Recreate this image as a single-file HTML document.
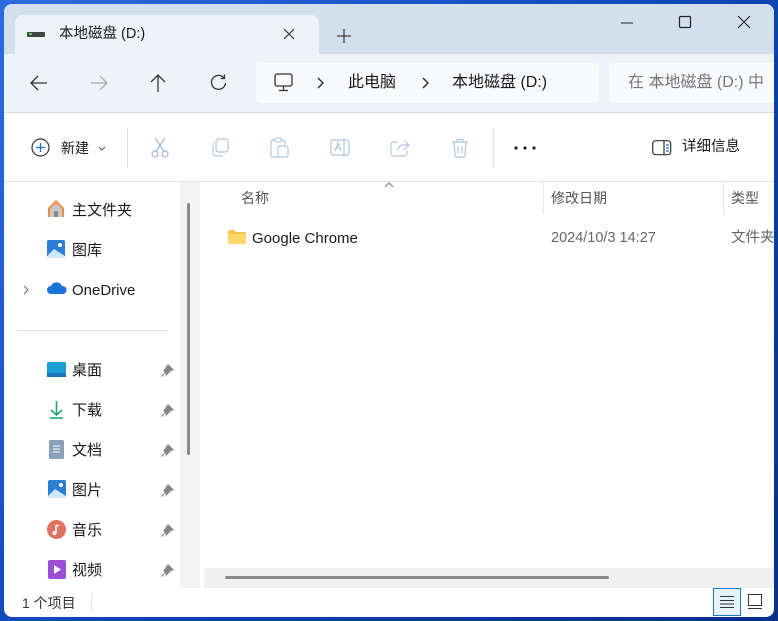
<!DOCTYPE html>
<html><head><meta charset="utf-8"><style>
*{margin:0;padding:0;box-sizing:border-box}
body{width:778px;height:621px;overflow:hidden;background:linear-gradient(135deg,#2a6de0,#0b3fb0 60%,#0a2f8a);font-family:"Liberation Sans","Noto Sans CJK SC",sans-serif;position:relative;color:#1a1a1a}
.win{position:absolute;left:4px;top:4px;width:770px;height:613px;background:#fff;border-radius:8px;overflow:hidden}
.abs{position:absolute}
.t{position:absolute;font-size:15px;white-space:nowrap;line-height:1}
svg{position:absolute;overflow:visible}
</style></head><body>
<div class="win">
  <div class="abs" style="left:0;top:0;width:770px;height:50px;background:#d4dfed"></div>
  <div class="abs" style="left:11px;top:11px;width:304px;height:42px;background:#eef3f9;border-radius:8px 8px 0 0"></div>
  <div class="abs" style="left:0;top:50px;width:770px;height:59px;background:#eef3f9;border-bottom:1px solid #d6dbe2"></div>
  <div class="abs" style="left:252px;top:59px;width:343px;height:40px;background:#f8fafd;border-radius:5px"></div>
  <div class="abs" style="left:605px;top:59px;width:170px;height:40px;background:#f8fafd;border-radius:5px"></div>
</div>
<!-- tab -->
<div class="abs" style="left:27px;top:32px;width:18px;height:5px;background:#444;border-radius:1px"></div>
<div class="abs" style="left:29px;top:33px;width:3px;height:2px;background:#6c6"></div>
<div class="t" style="left:59px;top:27px;font-size:14.5px">本地磁盘 (D:)</div>
<svg style="left:283px;top:28px" width="12" height="12"><path d="M1 1L11 11M11 1L1 11" stroke="#333" stroke-width="1.2"/></svg>
<svg style="left:337px;top:29px" width="14" height="14"><path d="M7 0V14M0 7H14" stroke="#444" stroke-width="1.3"/></svg>
<!-- window controls -->
<svg style="left:621px;top:22px" width="12" height="2"><path d="M0 1H12" stroke="#222" stroke-width="1"/></svg>
<svg style="left:679px;top:16px" width="12" height="12"><rect x=".5" y=".5" width="11" height="11" fill="none" stroke="#222" stroke-width="1.2" rx="1"/></svg>
<svg style="left:738px;top:16px" width="12" height="12"><path d="M0 0L12 12M12 0L0 12" stroke="#222" stroke-width="1.1"/></svg>
<!-- nav -->
<svg style="left:30px;top:75px" width="18" height="16"><path d="M17 8H1M8 1L1 8L8 15" stroke="#333" stroke-width="1.3" fill="none"/></svg>
<svg style="left:90px;top:75px" width="18" height="16"><path d="M1 8H17M10 1L17 8L10 15" stroke="#aaa" stroke-width="1.3" fill="none"/></svg>
<svg style="left:150px;top:74px" width="16" height="18"><path d="M8 18V1M1 8L8 1L15 8" stroke="#333" stroke-width="1.3" fill="none"/></svg>
<svg style="left:210px;top:74px" width="17" height="17"><path d="M14 4A7 7 0 1 0 15.5 9M14.5 0.5V4.5H10.5" stroke="#333" stroke-width="1.3" fill="none"/></svg>
<svg style="left:274px;top:73px" width="20" height="19"><rect x="1" y="1" width="17" height="12" rx="2" fill="none" stroke="#333" stroke-width="1.3"/><path d="M9.5 13V17M5 17.5H14" stroke="#333" stroke-width="1.3"/></svg>
<svg style="left:317px;top:77px" width="8" height="12"><path d="M1 1L6 6L1 11" stroke="#222" stroke-width="1.3" fill="none"/></svg>
<div class="t" style="left:348px;top:75px;font-size:16px">此电脑</div>
<svg style="left:422px;top:77px" width="8" height="12"><path d="M1 1L6 6L1 11" stroke="#222" stroke-width="1.3" fill="none"/></svg>
<div class="t" style="left:452px;top:75px;font-size:16px">本地磁盘 (D:)</div>
<div class="t" style="left:628px;top:75px;font-size:16px;color:#777">在 本地磁盘 (D:) 中</div>
<!-- command bar -->
<svg style="left:31px;top:138px" width="19" height="19"><circle cx="9.5" cy="9.5" r="8.5" fill="none" stroke="#333" stroke-width="1.2"/><path d="M9.5 5V14M5 9.5H14" stroke="#1a6fd0" stroke-width="1.3"/></svg>
<div class="t" style="left:61px;top:141px;font-size:14px">新建</div>
<svg style="left:98px;top:146px" width="8" height="5"><path d="M1 1L4 4L7 1" stroke="#555" fill="none"/></svg>
<div class="abs" style="left:127px;top:128px;width:1px;height:40px;background:#e3e3e3"></div>
<svg style="left:150px;top:137px" width="20" height="21"><path d="M5 1L14 14M15 1L6 14" stroke="#9db8d6" stroke-width="1.2"/><circle cx="5" cy="17" r="3" fill="none" stroke="#9db8d6" stroke-width="1.2"/><circle cx="15" cy="17" r="3" fill="none" stroke="#9db8d6" stroke-width="1.2"/></svg>
<svg style="left:210px;top:138px" width="20" height="20"><rect x="6" y="1" width="12" height="13" rx="3" fill="none" stroke="#b0c6de" stroke-width="1.2"/><path d="M3 5V15A3 3 0 0 0 6 18H13" stroke="#b0c6de" stroke-width="1.2" fill="none"/></svg>
<svg style="left:270px;top:137px" width="20" height="21"><rect x="1" y="3" width="14" height="17" rx="2" fill="none" stroke="#b0c6de" stroke-width="1.2"/><rect x="5" y="1" width="6" height="4" rx="1" fill="#fff" stroke="#b0c6de"/><rect x="8" y="9" width="10" height="11" rx="2" fill="#fff" stroke="#b0c6de" stroke-width="1.2"/></svg>
<svg style="left:330px;top:138px" width="21" height="20"><rect x="1" y="2" width="18" height="15" rx="2" fill="none" stroke="#b0c6de" stroke-width="1.2"/><path d="M5 13L8 5L11 13M6 10H10M14 0V19" stroke="#b0c6de" stroke-width="1.2" fill="none"/></svg>
<svg style="left:390px;top:138px" width="21" height="20"><path d="M8 4H4A3 3 0 0 0 1 7V15A3 3 0 0 0 4 18H14A3 3 0 0 0 17 15V13" stroke="#b0c6de" stroke-width="1.2" fill="none"/><path d="M14 2L19 7L14 12M19 7H13A5 5 0 0 0 8 12" stroke="#b0c6de" stroke-width="1.2" fill="none"/></svg>
<svg style="left:451px;top:138px" width="18" height="20"><path d="M1 4H17M6 4V1.5H12V4M3 4L4 17A2 2 0 0 0 6 19H12A2 2 0 0 0 14 17L15 4M7 8V15M11 8V15" stroke="#b0c6de" stroke-width="1.2" fill="none"/></svg>
<div class="abs" style="left:493px;top:128px;width:1px;height:40px;background:#e3e3e3"></div>
<svg style="left:514px;top:146px" width="22" height="4"><circle cx="2" cy="2" r="1.6" fill="#222"/><circle cx="11" cy="2" r="1.6" fill="#222"/><circle cx="20" cy="2" r="1.6" fill="#222"/></svg>
<svg style="left:652px;top:140px" width="20" height="16"><rect x=".7" y=".7" width="18" height="14" rx="3" fill="none" stroke="#333" stroke-width="1.2"/><path d="M12 1V15" stroke="#333" stroke-width="1.2"/><path d="M14 5H17M14 8H17M14 11H17" stroke="#1a6fd0" stroke-width="1.2"/></svg>
<div class="t" style="left:682px;top:140px;font-size:14.5px">详细信息</div>
<div class="abs" style="left:4px;top:181px;width:770px;height:1px;background:#e5e5e5"></div>
<!-- sidebar -->
<div class="abs" style="left:180px;top:182px;width:20px;height:406px;background:#f3f3f3"></div>
<div class="abs" style="left:187px;top:203px;width:3px;height:252px;background:#8a8a8a;border-radius:2px"></div>
<div class="abs" style="left:204px;top:568px;width:570px;height:20px;background:#f0f0f0"></div>
<div class="abs" style="left:225px;top:576px;width:384px;height:3px;background:#888;border-radius:2px"></div>
<svg style="left:47px;top:199px" width="18" height="19"><path d="M9 1L1 9V18H17V9Z" fill="#f08a3a"/><path d="M3 9.5V18H15V9.5L9 4Z" fill="#c8c8c8"/><rect x="7" y="12" width="4" height="6" fill="#888"/></svg>
<div class="t" style="left:72px;top:203px">主文件夹</div>
<svg style="left:47px;top:240px" width="18" height="19"><rect width="18" height="18" rx="2" fill="#2a7fd4"/><path d="M0 16L7 9L18 16V18H0Z" fill="#cfe6fb"/><circle cx="13" cy="5" r="2" fill="#fff"/></svg>
<div class="t" style="left:72px;top:243px">图库</div>
<svg style="left:23px;top:285px" width="6" height="10"><path d="M1 1L5 5L1 9" stroke="#666" fill="none"/></svg>
<svg style="left:47px;top:282px" width="20" height="13"><path d="M4 12A4 4 0 0 1 4 4A6 6 0 0 1 15 4A4 4 0 0 1 16 12Z" fill="#1a73d8"/></svg>
<div class="t" style="left:72px;top:283px">OneDrive</div>
<div class="abs" style="left:17px;top:330px;width:151px;height:1px;background:#ddd"></div>
<svg style="left:47px;top:362px" width="19" height="16"><rect width="19" height="15" rx="1.5" fill="#1a9ed4"/><rect y="11" width="19" height="4" fill="#1776b8"/></svg>
<div class="t" style="left:72px;top:363px">桌面</div>
<svg style="left:49px;top:400px" width="15" height="19"><path d="M7.5 1V15M2 10L7.5 15L13 10" stroke="#1ea57a" stroke-width="1.6" fill="none"/><path d="M1 18H14" stroke="#1ea57a" stroke-width="1.6"/></svg>
<div class="t" style="left:72px;top:403px">下载</div>
<svg style="left:49px;top:440px" width="15" height="19"><rect width="15" height="19" rx="1.5" fill="#8aa0ba"/><path d="M4 6H11M4 9H11M4 12H11" stroke="#fff" stroke-width="1"/></svg>
<div class="t" style="left:72px;top:443px">文档</div>
<svg style="left:48px;top:480px" width="18" height="18"><rect width="18" height="18" rx="2" fill="#2a7fd4"/><path d="M0 16L7 9L18 16V18H0Z" fill="#cfe6fb"/><circle cx="13" cy="5" r="2" fill="#fff"/></svg>
<div class="t" style="left:72px;top:483px">图片</div>
<svg style="left:47px;top:520px" width="19" height="19"><circle cx="9.5" cy="9.5" r="9.5" fill="#e07060"/><path d="M9 5V13M9 5L12 6" stroke="#fff" stroke-width="1.5"/><circle cx="7.5" cy="13" r="2" fill="#fff"/></svg>
<div class="t" style="left:72px;top:523px">音乐</div>
<svg style="left:48px;top:560px" width="18" height="19"><rect width="18" height="19" rx="2" fill="#9b4fd4"/><path d="M6 5V14L13 9.5Z" fill="#fff"/></svg>
<div class="t" style="left:72px;top:563px">视频</div>
<svg style="left:161px;top:364px" width="14" height="100"><g fill="#888">
<path d="M7 0L13 6L10 7L7 10L5 12L4 9L1 13L0 12L4 8L2 7Z"/></g></svg>
<svg style="left:161px;top:404px" width="14" height="14"><path d="M7 0L13 6L10 7L7 10L5 12L4 9L1 13L0 12L4 8L2 7Z" fill="#888"/></svg>
<svg style="left:161px;top:444px" width="14" height="14"><path d="M7 0L13 6L10 7L7 10L5 12L4 9L1 13L0 12L4 8L2 7Z" fill="#888"/></svg>
<svg style="left:161px;top:484px" width="14" height="14"><path d="M7 0L13 6L10 7L7 10L5 12L4 9L1 13L0 12L4 8L2 7Z" fill="#888"/></svg>
<svg style="left:161px;top:524px" width="14" height="14"><path d="M7 0L13 6L10 7L7 10L5 12L4 9L1 13L0 12L4 8L2 7Z" fill="#888"/></svg>
<svg style="left:161px;top:564px" width="14" height="14"><path d="M7 0L13 6L10 7L7 10L5 12L4 9L1 13L0 12L4 8L2 7Z" fill="#888"/></svg>
<!-- content -->
<svg style="left:384px;top:182px" width="10" height="6"><path d="M1 5L5 1L9 5" stroke="#777" fill="none"/></svg>
<div class="t" style="left:241px;top:191px;font-size:14px;color:#555">名称</div>
<div class="abs" style="left:543px;top:182px;width:1px;height:32px;background:#e5e5e5"></div>
<div class="t" style="left:551px;top:191px;font-size:14px;color:#555">修改日期</div>
<div class="abs" style="left:723px;top:182px;width:1px;height:32px;background:#e5e5e5"></div>
<div class="t" style="left:731px;top:191px;font-size:14px;color:#555">类型</div>
<svg style="left:228px;top:230px" width="18" height="14"><path d="M0 1.5A1.5 1.5 0 0 1 1.5 0H6L8 2H16.5A1.5 1.5 0 0 1 18 3.5V12.5A1.5 1.5 0 0 1 16.5 14H1.5A1.5 1.5 0 0 1 0 12.5Z" fill="#f2c44d"/><path d="M0 4H18V12.5A1.5 1.5 0 0 1 16.5 14H1.5A1.5 1.5 0 0 1 0 12.5Z" fill="#fcd86a"/></svg>
<div class="t" style="left:252px;top:231px">Google Chrome</div>
<div class="t" style="left:551px;top:231px;color:#666;font-size:14.5px">2024/10/3 14:27</div>
<div class="t" style="left:731px;top:231px;color:#666;font-size:14.5px">文件夹</div>
<!-- status -->
<div class="t" style="left:22px;top:596px;font-size:14px;color:#333">1 个项目</div>
<div class="abs" style="left:91px;top:594px;width:1px;height:18px;background:#e5e5e5"></div>
<div class="abs" style="left:713px;top:588px;width:28px;height:28px;background:#e5f1fb;border:1px solid #1a78c2"></div>
<svg style="left:720px;top:596px" width="14" height="12"><path d="M0 .5H14M0 4.5H14M0 8H14M0 11.5H14" stroke="#333"/></svg>
<svg style="left:748px;top:594px" width="16" height="16"><rect x=".5" y=".5" width="13" height="11" fill="none" stroke="#333"/><path d="M0 14.5H14" stroke="#333"/></svg>
</body></html>
